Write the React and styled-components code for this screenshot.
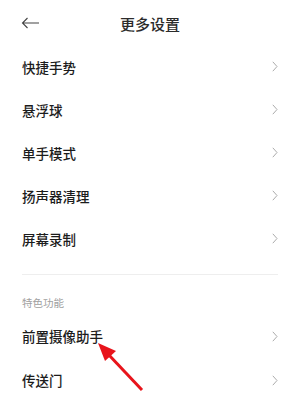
import React from "react";
import styled, { createGlobalStyle } from "styled-components";

const GlobalStyle = createGlobalStyle`
  html, body {
    margin: 0;
    padding: 0;
    background: #fff;
  }
  body {
    font-family: "Noto Sans CJK SC", "Noto Sans", sans-serif;
  }
`;

const mainItems = ["快捷手势", "悬浮球", "单手模式", "扬声器清理", "屏幕录制"];
const featureItems = ["前置摄像助手", "传送门"];

const Chevron = () => (
  <svg width="6" height="11" viewBox="0 0 6 11">
    <path d="M0.8 0.8 L5 5.5 L0.8 10.2" fill="none" stroke="#ababab" strokeWidth="1" />
  </svg>
);

const BackArrow = () => (
  <svg width="19" height="12" viewBox="0 0 19 12">
    <path
      d="M18 6 H1.5 M6.5 1 L1.5 6 L6.5 11"
      fill="none"
      stroke="#444"
      strokeWidth="1.1"
    />
  </svg>
);

const App = () => {
  return (
    <Page>
      <GlobalStyle />
      <Header>
        <BackButton>
          <BackArrow />
        </BackButton>
        <Title>更多设置</Title>
      </Header>
      <List>
        {mainItems.map((item) => (
          <Row key={item} $h={43}>
            <RowLabel>{item}</RowLabel>
            <Chevron />
          </Row>
        ))}
      </List>
      <Divider />
      <SectionLabel>特色功能</SectionLabel>
      <List>
        {featureItems.map((item) => (
          <Row key={item} $h={44}>
            <RowLabel>{item}</RowLabel>
            <Chevron />
          </Row>
        ))}
      </List>
      <Pointer width="60" height="60" viewBox="0 0 60 60">
        <line x1="50" y1="53" x2="16" y2="17" stroke="#e8141b" strokeWidth="3" />
        <polygon points="6,6 24,14 13,24" fill="#e8141b" />
      </Pointer>
    </Page>
  );
};

const Page = styled.div`
  position: relative;
  width: 300px;
  height: 400px;
  overflow: hidden;
  background: #fff;
`;

const Header = styled.header`
  position: relative;
  height: 45px;
  display: flex;
  align-items: center;
  justify-content: center;
`;

const BackButton = styled.div`
  position: absolute;
  left: 21px;
  top: 17px;
  display: flex;
`;

const Title = styled.h1`
  margin: 0;
  font-size: 15px;
  font-weight: 500;
  color: #2b2b2b;
  line-height: 1;
  padding-top: 2px;
`;

const List = styled.div`
  display: flex;
  flex-direction: column;
`;

const Row = styled.div`
  height: ${(p) => p.$h}px;
  padding: 0 22px 0 22px;
  display: flex;
  align-items: center;
  justify-content: space-between;
`;

const RowLabel = styled.span`
  font-size: 13.5px;
  font-weight: 500;
  color: #1c1c1c;
`;

const Divider = styled.div`
  height: 1px;
  background: #eeeeee;
  margin: 14px 22px 0;
`;

const SectionLabel = styled.div`
  padding: 21px 22px 4px;
  font-size: 10.5px;
  line-height: 14px;
  color: #a0a0a0;
`;

const Pointer = styled.svg`
  position: absolute;
  left: 92px;
  top: 337px;
`;

export default App;
